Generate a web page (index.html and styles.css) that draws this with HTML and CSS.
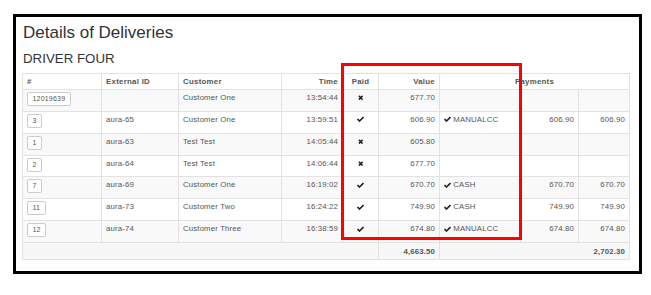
FILE: index.html
```html
<!DOCTYPE html>
<html lang="en">
<head>
<meta charset="utf-8">
<title>Details of Deliveries</title>
<link rel="stylesheet" href="styles.css">
</head>
<body>
<div class="panel">
  <h1 class="title">Details of Deliveries</h1>
  <h2 class="driver">DRIVER FOUR</h2>
  <table class="grid">
    <colgroup>
      <col class="c-num"><col class="c-ext"><col class="c-cust"><col class="c-time"><col class="c-paid"><col class="c-val"><col class="c-meth"><col class="c-amt"><col class="c-amt2">
    </colgroup>
    <thead>
      <tr><th>#</th><th>External ID</th><th>Customer</th><th class="r">Time</th><th class="c">Paid</th><th class="r">Value</th><th colspan="3" class="c">Payments</th></tr>
    </thead>
    <tbody>
      <tr class="odd"><td><span class="btn">12019639</span></td><td></td><td>Customer One</td><td class="r">13:54:44</td><td class="c"><svg class="ico-x" viewBox="0 0 12 12"><path d="M2 2L10 10M10 2L2 10"/></svg></td><td class="r">677.70</td><td></td><td></td><td></td></tr>
      <tr><td><span class="btn">3</span></td><td>aura-65</td><td>Customer One</td><td class="r">13:59:51</td><td class="c"><svg class="ico-ok" viewBox="0 0 14 12"><path d="M1 6L5 10L13 2"/></svg></td><td class="r">606.90</td><td><svg class="ico-ok" viewBox="0 0 14 12"><path d="M1 6L5 10L13 2"/></svg> MANUALCC</td><td class="r">606.90</td><td class="r">606.90</td></tr>
      <tr class="odd"><td><span class="btn">1</span></td><td>aura-63</td><td>Test Test</td><td class="r">14:05:44</td><td class="c"><svg class="ico-x" viewBox="0 0 12 12"><path d="M2 2L10 10M10 2L2 10"/></svg></td><td class="r">605.80</td><td></td><td></td><td></td></tr>
      <tr><td><span class="btn">2</span></td><td>aura-64</td><td>Test Test</td><td class="r">14:06:44</td><td class="c"><svg class="ico-x" viewBox="0 0 12 12"><path d="M2 2L10 10M10 2L2 10"/></svg></td><td class="r">677.70</td><td></td><td></td><td></td></tr>
      <tr class="odd"><td><span class="btn">7</span></td><td>aura-69</td><td>Customer One</td><td class="r">16:19:02</td><td class="c"><svg class="ico-ok" viewBox="0 0 14 12"><path d="M1 6L5 10L13 2"/></svg></td><td class="r">670.70</td><td><svg class="ico-ok" viewBox="0 0 14 12"><path d="M1 6L5 10L13 2"/></svg> CASH</td><td class="r">670.70</td><td class="r">670.70</td></tr>
      <tr><td><span class="btn">11</span></td><td>aura-73</td><td>Customer Two</td><td class="r">16:24:22</td><td class="c"><svg class="ico-ok" viewBox="0 0 14 12"><path d="M1 6L5 10L13 2"/></svg></td><td class="r">749.90</td><td><svg class="ico-ok" viewBox="0 0 14 12"><path d="M1 6L5 10L13 2"/></svg> CASH</td><td class="r">749.90</td><td class="r">749.90</td></tr>
      <tr class="odd"><td><span class="btn">12</span></td><td>aura-74</td><td>Customer Three</td><td class="r">16:38:59</td><td class="c"><svg class="ico-ok" viewBox="0 0 14 12"><path d="M1 6L5 10L13 2"/></svg></td><td class="r">674.80</td><td><svg class="ico-ok" viewBox="0 0 14 12"><path d="M1 6L5 10L13 2"/></svg> MANUALCC</td><td class="r">674.80</td><td class="r">674.80</td></tr>
    </tbody>
    <tfoot>
      <tr><td colspan="5"></td><td class="r">4,663.50</td><td colspan="3" class="r">2,702.30</td></tr>
    </tfoot>
  </table>
  <div class="highlight"></div>
</div>
</body>
</html>
```

FILE: styles.css
```css
html, body {
  margin: 0;
  padding: 0;
  background: #fff;
}

body {
  font-family: "Liberation Sans", Arial, sans-serif;
}

.panel {
  position: relative;
  box-sizing: border-box;
  width: 629px;
  height: 260px;
  margin: 14px 0 0 13px;
  border: 3px solid #000;
  padding: 0 0 0 6px;
}

.title {
  margin: 6px 0 0 1px;
  font-size: 17px;
  line-height: 20px;
  font-weight: normal;
  color: #333;
}

.driver {
  margin: 8px 0 0 1px;
  font-size: 13.3px;
  line-height: 16px;
  font-weight: normal;
  color: #333;
}

.grid {
  margin-top: 6px;
  border-collapse: separate;
  border-spacing: 0;
  table-layout: fixed;
  width: 608px;
  border-left: 1px solid #e2e2e2;
  border-top: 1px solid #e2e2e2;
  font-size: 7.8px;
  line-height: 11px;
  letter-spacing: 0.15px;
  color: #555;
}

.c-num { width: 79px; }
.c-ext { width: 77px; }
.c-cust { width: 103px; }
.c-time { width: 61px; }
.c-paid { width: 36px; }
.c-val { width: 61px; }
.c-meth { width: 81px; }
.c-amt { width: 58px; }
.c-amt2 { width: 51px; }

.grid th,
.grid td {
  box-sizing: border-box;
  border-right: 1px solid #e2e2e2;
  border-bottom: 1px solid #e2e2e2;
  padding: 0 4px;
  white-space: nowrap;
  overflow: hidden;
  text-align: left;
}

.grid th {
  height: 16px;
  vertical-align: middle;
  font-weight: bold;
  color: #555;
  letter-spacing: 0.3px;
}

.grid tbody td {
  height: 21.86px;
  padding-top: 2px;
  vertical-align: top;
}

.grid tbody tr.odd td {
  background: #f9f9f9;
}

.grid tfoot td {
  height: 17px;
  vertical-align: middle;
  font-weight: bold;
  background: #f7f7f7;
}

.grid .r { text-align: right; }
.grid .c { text-align: center; }

.btn {
  display: inline-block;
  box-sizing: border-box;
  height: 14px;
  padding: 0 4.5px;
  border: 1px solid #ccc;
  border-radius: 2px;
  background: #fff;
  font-size: 7px;
  line-height: 12px;
  letter-spacing: 0.2px;
  color: #555;
}

.ico-ok {
  width: 7px;
  height: 6px;
  vertical-align: -0.5px;
  fill: none;
  stroke: #222;
  stroke-width: 3.2;
}

.ico-x {
  width: 5.5px;
  height: 5.5px;
  vertical-align: -0.5px;
  fill: none;
  stroke: #222;
  stroke-width: 3.4;
}

.highlight {
  position: absolute;
  left: 325px;
  top: 46px;
  width: 181px;
  height: 177px;
  box-sizing: border-box;
  border: 3px solid #f00;
}
```
